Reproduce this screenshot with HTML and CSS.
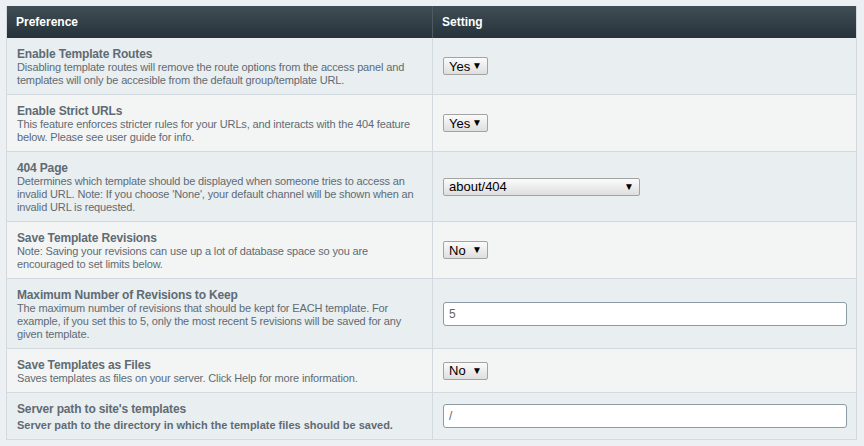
FILE: index.html
```html
<!DOCTYPE html>
<html>
<head>
<meta charset="utf-8">
<link rel="stylesheet" href="styles.css">
</head>
<body>
<table class="prefs">
  <thead>
    <tr>
      <th class="col-pref">Preference</th>
      <th class="col-set">Setting</th>
    </tr>
  </thead>
  <tbody>
    <tr class="odd">
      <td class="pref">
        <div class="title">Enable Template Routes</div>
        <div class="desc">Disabling template routes will remove the route options from the access panel and templates will only be accesible from the default group/template URL.</div>
      </td>
      <td class="set"><div class="select sm"><span>Yes</span><span class="arrow">&#9660;</span></div></td>
    </tr>
    <tr class="even">
      <td class="pref">
        <div class="title">Enable Strict URLs</div>
        <div class="desc">This feature enforces stricter rules for your URLs, and interacts with the 404 feature below. Please see user guide for info.</div>
      </td>
      <td class="set"><div class="select sm"><span>Yes</span><span class="arrow">&#9660;</span></div></td>
    </tr>
    <tr class="odd">
      <td class="pref">
        <div class="title">404 Page</div>
        <div class="desc">Determines which template should be displayed when someone tries to access an invalid URL. Note: If you choose 'None', your default channel will be shown when an invalid URL is requested.</div>
      </td>
      <td class="set"><div class="select lg"><span>about/404</span><span class="arrow">&#9660;</span></div></td>
    </tr>
    <tr class="even">
      <td class="pref">
        <div class="title">Save Template Revisions</div>
        <div class="desc">Note: Saving your revisions can use up a lot of database space so you are encouraged to set limits below.</div>
      </td>
      <td class="set"><div class="select sm"><span>No</span><span class="arrow">&#9660;</span></div></td>
    </tr>
    <tr class="odd">
      <td class="pref">
        <div class="title">Maximum Number of Revisions to Keep</div>
        <div class="desc">The maximum number of revisions that should be kept for EACH template. For example, if you set this to 5, only the most recent 5 revisions will be saved for any given template.</div>
      </td>
      <td class="set"><input class="field" type="text" value="5"></td>
    </tr>
    <tr class="even">
      <td class="pref">
        <div class="title">Save Templates as Files</div>
        <div class="desc">Saves templates as files on your server. Click Help for more information.</div>
      </td>
      <td class="set"><div class="select sm"><span>No</span><span class="arrow">&#9660;</span></div></td>
    </tr>
    <tr class="odd last">
      <td class="pref">
        <div class="title">Server path to site's templates</div>
        <div class="desc strong">Server path to the directory in which the template files should be saved.</div>
      </td>
      <td class="set"><input class="field" type="text" value="/"></td>
    </tr>
  </tbody>
</table>
</body>
</html>
```
FILE: styles.css
```css
html, body {
  margin: 0;
  padding: 0;
  background: #ecf0f3;
}
body {
  padding: 6px 7px 6px 6px;
  font-family: "Liberation Sans", Arial, sans-serif;
}
.prefs {
  width: 851px;
  border-collapse: collapse;
  border-left: 1px solid #d2dae0;
  border-right: 1px solid #d2dae0;
}
.prefs th {
  height: 32px;
  padding: 0 0 0 9px;
  text-align: left;
  font-size: 12px;
  font-weight: bold;
  color: #ffffff;
  background: linear-gradient(#3f4d55, #27333a);
  vertical-align: middle;
}
.col-pref {
  width: 417px;
}
.col-set {
  border-left: 1px solid #4d5a62;
}
.prefs td {
  border-bottom: 1px solid #d2dae0;
}
.odd td { background: #e9eef1; }
.even td { background: #f3f5f5; }
.pref {
  padding: 10px 8px 7px 10px;
  vertical-align: top;
  color: #5f6b73;
}
.set {
  border-left: 1px solid #d2dae0;
  padding: 0 9px 0 10px;
  vertical-align: middle;
}
.title {
  font-size: 12px;
  line-height: 13px;
  font-weight: bold;
  letter-spacing: -0.15px;
}
.desc {
  font-size: 11px;
  line-height: 13px;
  letter-spacing: -0.15px;
}
.desc.strong {
  font-weight: bold;
  letter-spacing: 0;
  margin-top: 3px;
}
.select {
  display: flex;
  align-items: center;
  box-sizing: border-box;
  height: 18px;
  padding: 0 5px 0 5px;
  border: 1px solid #a3a3a3;
  border-radius: 2px;
  background: linear-gradient(#fbfbfb, #dedede);
  font-size: 13px;
  color: #000;
}
.select.sm { width: 45px; }
.select.lg { width: 197px; }
.select .arrow {
  margin-left: auto;
  font-size: 10px;
  line-height: 1;
}
.field {
  display: block;
  box-sizing: border-box;
  width: 404px;
  height: 24px;
  margin: 0;
  padding: 0 5px;
  border: 1px solid #8d9ba4;
  border-radius: 3px;
  background: #ffffff;
  font-family: "Liberation Sans", Arial, sans-serif;
  font-size: 12px;
  color: #666666;
  outline: none;
}
```
